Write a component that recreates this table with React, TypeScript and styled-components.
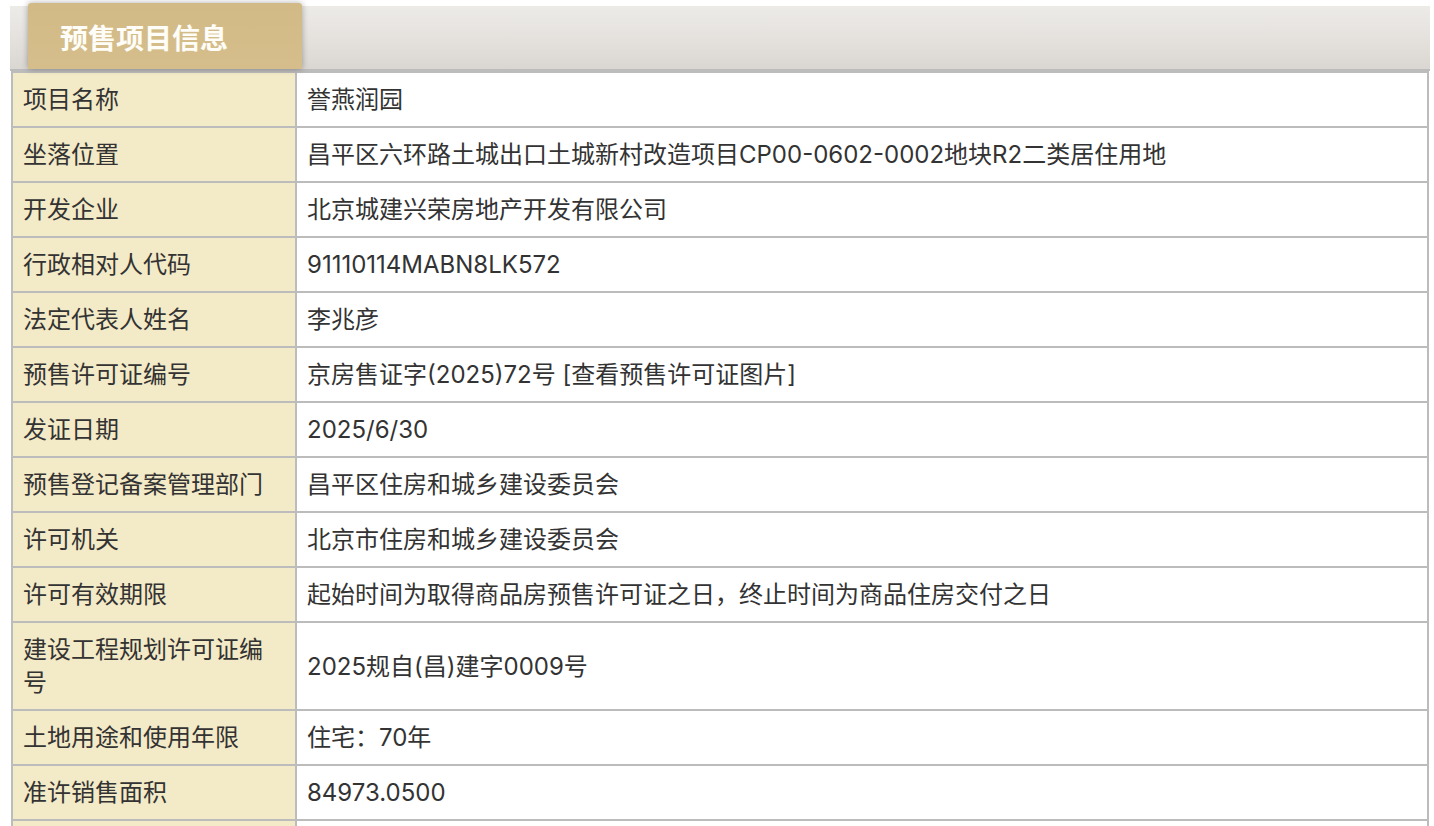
import React from "react";
import styled, { createGlobalStyle } from "styled-components";

const GlobalStyle = createGlobalStyle`
  body {
    margin: 0;
    background: #fff;
    font-family: Inter, "Noto Sans CJK SC", sans-serif;
    color: #333;
  }
`

const Panel = styled.div`
  margin: 0 4px 0 10px;
`

const HeaderBar = styled.div`
  margin-top: 6px;
  height: 63px;
  display: flex;
  align-items: flex-end;
  padding-left: 18px;
  background: linear-gradient(to bottom, #edebe8 0%, #e3e0dc 60%, #dad6d1 100%);
  border-bottom: 2px solid #bcbcbc;
`

const Tab = styled.div`
  height: 66px;
  width: 274px;
  box-sizing: border-box;
  padding: 2px 0 0 32px;
  display: flex;
  align-items: center;
  background: linear-gradient(to bottom, #d1ba86 0%, #d5be8b 100%);
  border-radius: 3px 3px 0 0;
  box-shadow: 0 0 6px rgba(0, 0, 0, 0.32);
  color: #fffdf7;
  font-size: 28px;
  font-weight: bold;
  font-family: "Noto Sans CJK SC", sans-serif;
`

const Table = styled.table`
  margin: 0 1px;
  width: calc(100% - 2px);
  border-spacing: 0;
  border-top: 2px solid #bcbcbc;
  border-left: 2px solid #bcbcbc;
  font-size: 24px;
  line-height: 33px;
`

const Cell = styled.td<{ $label?: boolean }>`
  padding: ${(p) => (p.$label ? "10px 11px 10px 10px" : "10px 10px")};
  width: ${(p) => (p.$label ? "261px" : "auto")};
  background: ${(p) => (p.$label ? "#f3eac7" : "#fff")};
  border-right: 2px solid #bcbcbc;
  border-bottom: 2px solid #bcbcbc;
  vertical-align: middle;
  color: #333;
`

const rows: [string, string][] = [
  ["项目名称", "誉燕润园"],
  ["坐落位置", "昌平区六环路土城出口土城新村改造项目CP00-0602-0002地块R2二类居住用地"],
  ["开发企业", "北京城建兴荣房地产开发有限公司"],
  ["行政相对人代码", "91110114MABN8LK572"],
  ["法定代表人姓名", "李兆彦"],
  ["预售许可证编号", "京房售证字(2025)72号 [查看预售许可证图片]"],
  ["发证日期", "2025/6/30"],
  ["预售登记备案管理部门", "昌平区住房和城乡建设委员会"],
  ["许可机关", "北京市住房和城乡建设委员会"],
  ["许可有效期限", "起始时间为取得商品房预售许可证之日，终止时间为商品住房交付之日"],
  ["建设工程规划许可证编号", "2025规自(昌)建字0009号"],
  ["土地用途和使用年限", "住宅：70年"],
  ["准许销售面积", "84973.0500"],
];

export default function App() {
  return (
    <>
      <GlobalStyle />
      <Panel>
        <HeaderBar>
          <Tab>预售项目信息</Tab>
        </HeaderBar>
        <Table>
          <tbody>
            {rows.map(([k, v]) => (
              <tr key={k}>
                <Cell $label>{k}</Cell>
                <Cell>{v}</Cell>
              </tr>
            ))}
            <tr>
              <Cell $label>{"\u00a0"}</Cell>
              <Cell>{"\u00a0"}</Cell>
            </tr>
          </tbody>
        </Table>
      </Panel>
    </>
  );
}
